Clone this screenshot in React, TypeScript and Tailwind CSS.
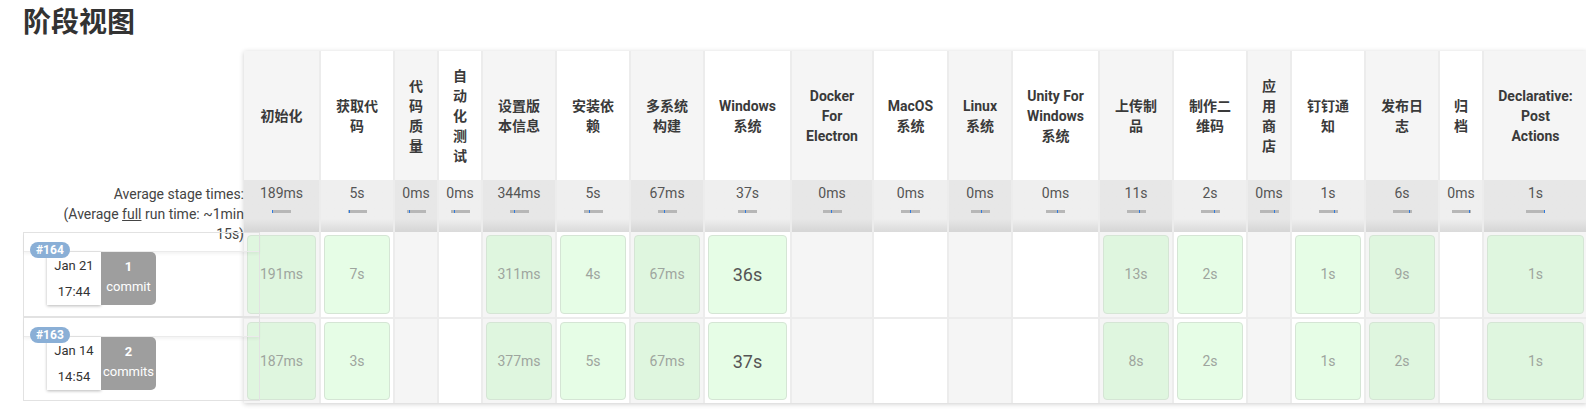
type Stage = {
  name: string
  w: string
  avg: string
  runs: (string | null)[]
  big?: boolean
  px?: string
}

const stages: Stage[] = [
  { name: '初始化', w: 'w-[75px]', avg: '189ms', runs: ['191ms', '187ms'] },
  { name: '获取代码', w: 'w-[74px]', avg: '5s', runs: ['7s', '3s'] },
  { name: '代码质量', w: 'w-[44px]', avg: '0ms', runs: [null, null] },
  { name: '自动化测试', w: 'w-[44px]', avg: '0ms', runs: [null, null] },
  { name: '设置版本信息', w: 'w-[74px]', avg: '344ms', runs: ['311ms', '377ms'] },
  { name: '安装依赖', w: 'w-[74px]', avg: '5s', runs: ['4s', '5s'] },
  { name: '多系统构建', w: 'w-[74px]', avg: '67ms', runs: ['67ms', '67ms'] },
  { name: 'Windows 系统', w: 'w-[87px]', avg: '37s', runs: ['36s', '37s'], big: true },
  { name: 'Docker For Electron', w: 'w-[82px]', avg: '0ms', runs: [null, null] },
  { name: 'MacOS 系统', w: 'w-[75px]', avg: '0ms', runs: [null, null] },
  { name: 'Linux 系统', w: 'w-[64px]', avg: '0ms', runs: [null, null] },
  { name: 'Unity For Windows 系统', w: 'w-[87px]', avg: '0ms', runs: [null, null] },
  { name: '上传制品', w: 'w-[74px]', avg: '11s', runs: ['13s', '8s'] },
  { name: '制作二维码', w: 'w-[74px]', avg: '2s', runs: ['2s', '2s'] },
  { name: '应用商店', w: 'w-[44px]', avg: '0ms', runs: [null, null] },
  { name: '钉钉通知', w: 'w-[74px]', avg: '1s', runs: ['1s', '1s'] },
  { name: '发布日志', w: 'w-[74px]', avg: '6s', runs: ['9s', '2s'] },
  { name: '归档', w: 'w-[44px]', avg: '0ms', runs: [null, null] },
  { name: 'Declarative: Post Actions', w: 'w-[105px]', avg: '1s', runs: ['1s', '1s'], px: 'px-[15px]' },
]

const builds = [
  { id: 164, date: 'Jan 21', time: '17:44', count: '1', label: 'commit', h: 'h-[85px]' },
  { id: 163, date: 'Jan 14', time: '14:54', count: '2', label: 'commits', h: 'h-[84px]' },
]

function BuildRow({ b }: { b: (typeof builds)[number] }) {
  return (
    <div className={`relative border border-[#e2e2e2] ${b.h}`}>
      <div className="h-[19px] border-b border-[#ebebeb] shadow-[0_2px_3px_rgba(0,0,0,0.05)]" />
      <span className="absolute left-[6px] top-[9px] z-10 h-[16px] rounded-full bg-[#8aafd6] px-[6px] text-[12px] font-bold leading-[16px] text-white">
        #{b.id}
      </span>
      <div className="ml-[23px] flex h-[53px] w-fit">
        <div className="flex w-[54px] flex-col items-center pt-[1px] text-[13px] leading-[26px] text-[#333] bg-white shadow-[0_1px_3px_rgba(0,0,0,0.28)]">
          <span>{b.date}</span>
          <span>{b.time}</span>
        </div>
        <div className="flex w-[55px] flex-col items-center rounded-r-[5px] bg-[#9e9e9e] pt-[5px] text-[13px] leading-[20px] text-white">
          <span className="font-bold">{b.count}</span>
          <span>{b.label}</span>
        </div>
      </div>
    </div>
  )
}

function StageColumn({ s, i }: { s: Stage; i: number }) {
  const odd = i % 2 === 0
  return (
    <div className={`flex shrink-0 flex-col border-l-2 border-[#ececec] first:border-l-0 ${s.w}`}>
      <div
        className={`flex h-[129px] items-center justify-center text-center text-[14px] font-bold leading-[20px] text-[#3a3a3a] ${
          s.px ?? 'px-[10px]'
        } ${odd ? 'bg-[#f5f5f5]' : 'bg-white'}`}
      >
        {s.name}
      </div>
      <div
        className={`flex h-[52px] flex-col items-center pt-[3px] ${
          odd
            ? 'bg-linear-to-b from-[#e7e7e7] from-75% to-[#d5d5d5]'
            : 'bg-linear-to-b from-[#efefef] from-75% to-[#dadada]'
        }`}
      >
        <span className="text-[14px] leading-[20px] text-[#555]">{s.avg}</span>
        <div className="relative mt-[7px] h-[3px] w-[19px] bg-[#b7b7b7]">
          <div className="absolute top-0 h-[3px] w-px bg-[#2f7be0]" style={{ left: i }} />
        </div>
      </div>
      {s.runs.map((r, k) => (
        <div
          key={k}
          className={`${k === 0 ? 'h-[85px]' : 'h-[86px] border-t-2 border-[#ececec]'} p-[3px] ${
            odd ? 'bg-[#f5f5f5]' : 'bg-white'
          }`}
        >
          {r && (
            <div
              className={`flex h-full items-center justify-center rounded-[4px] border border-[#d5e5d5] ${
                odd ? 'bg-[#dff6df]' : 'bg-[#e6fde6]'
              } ${s.big ? 'text-[18px] text-[#555]' : 'text-[14px] text-[#9ea59e]'}`}
            >
              {r}
            </div>
          )}
        </div>
      ))}
    </div>
  )
}

export default function App() {
  return (
    <div className="h-[416px] w-full overflow-hidden bg-white px-[23px] font-['Roboto','Noto_Sans_CJK_SC',sans-serif]">
      <h1 className="pt-[6px] text-[28px] font-bold leading-[34px] text-[#333]">阶段视图</h1>
      <div className="mt-[11px] flex">
        <div className="relative z-10 -mr-[16px] flex w-[237px] shrink-0 flex-col">
          <div className="h-[129px]" />
          <div className="h-[52px] pr-[16px] pt-[4px]">
            <p className="ml-auto w-[185px] text-right text-[14px] leading-[20px] text-[#444]">
              Average stage times:
              <br />
              (Average <span className="underline">full</span> run time: ~1min 15s)
            </p>
          </div>
          {builds.map((b) => (
            <BuildRow key={b.id} b={b} />
          ))}
        </div>
        <div className="flex shrink-0 self-start shadow-[0_1px_5px_rgba(0,0,0,0.2)]">
          {stages.map((s, i) => (
            <StageColumn key={s.name} s={s} i={i} />
          ))}
        </div>
      </div>
    </div>
  )
}
